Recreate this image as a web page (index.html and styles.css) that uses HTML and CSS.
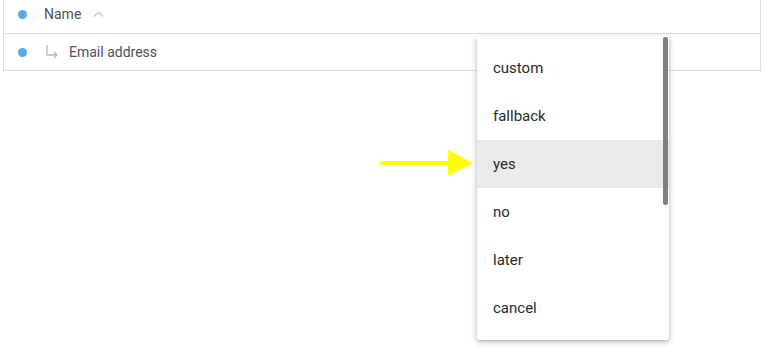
FILE: index.html
```html
<!DOCTYPE html>
<html lang="en">
<head>
    <meta charset="UTF-8">
    <title>Fields</title>
    <link rel="stylesheet" href="styles.css">
</head>
<body>
    <div class="fields">
        <div class="row head">
            <span class="dot"></span>
            <span class="label">Name</span>
            <svg class="caret" width="11" height="6" viewBox="0 0 11 6"><path d="M1 5.5 L5.5 1.2 L10 5.5" fill="none" stroke="#c4c4c8" stroke-width="1.2"/></svg>
        </div>
        <div class="row">
            <span class="dot"></span>
            <svg class="sub" width="14" height="15" viewBox="0 0 14 15"><path d="M2 1 V11 H12 M9 8 L12 11 L9 14" fill="none" stroke="#b8b8bc" stroke-width="1.3"/></svg>
            <span class="label">Email address</span>
        </div>
    </div>

    <svg class="pointer" width="94" height="26" viewBox="0 0 94 26">
        <rect x="0" y="11" width="70" height="4" fill="#ffff00"/>
        <polygon points="68,0 93,13 68,26" fill="#ffff00"/>
    </svg>

    <div class="menu">
        <ul>
            <li>custom</li>
            <li>fallback</li>
            <li class="active">yes</li>
            <li>no</li>
            <li>later</li>
            <li>cancel</li>
        </ul>
        <div class="thumb"></div>
    </div>
</body>
</html>
```

FILE: styles.css
```css
body {
    margin: 0;
    font-family: Roboto, 'Liberation Sans', sans-serif;
    background: #ffffff;
    height: 353px;
    overflow: hidden;
}

.fields {
    margin: -3px 4px 0 3px;
    border: 1px solid #dedede;
    border-top: none;
}

.row {
    display: flex;
    align-items: center;
    height: 36px;
    padding-left: 14px;
    font-size: 14px;
    color: #50505a;
}

.row.head {
    height: 34px;
    padding-bottom: 2px;
    border-bottom: 1px solid #dedede;
}

.dot {
    width: 9px;
    height: 9px;
    border-radius: 50%;
    background: #55aaf0;
    margin-right: 17px;
}

.caret {
    margin-left: 12px;
}

.sub {
    margin: 0 10px 2px 1px;
}

.pointer {
    position: absolute;
    left: 380px;
    top: 150px;
}

.menu {
    position: absolute;
    left: 477px;
    top: 36px;
    width: 192px;
    background: #ffffff;
    border-radius: 2px;
    box-shadow: 0 2px 6px rgba(0, 0, 0, 0.25), 0 1px 2px rgba(0, 0, 0, 0.12);
}

.menu ul {
    list-style: none;
    margin: 0;
    padding: 8px 0;
}

.menu li {
    height: 48px;
    line-height: 48px;
    padding-left: 16px;
    font-size: 15px;
    color: #2a2a2a;
}

.menu li.active {
    background: #ebebeb;
}

.thumb {
    position: absolute;
    right: 1px;
    top: 1px;
    width: 5px;
    height: 168px;
    border-radius: 2px;
    background: #808080;
}
```
